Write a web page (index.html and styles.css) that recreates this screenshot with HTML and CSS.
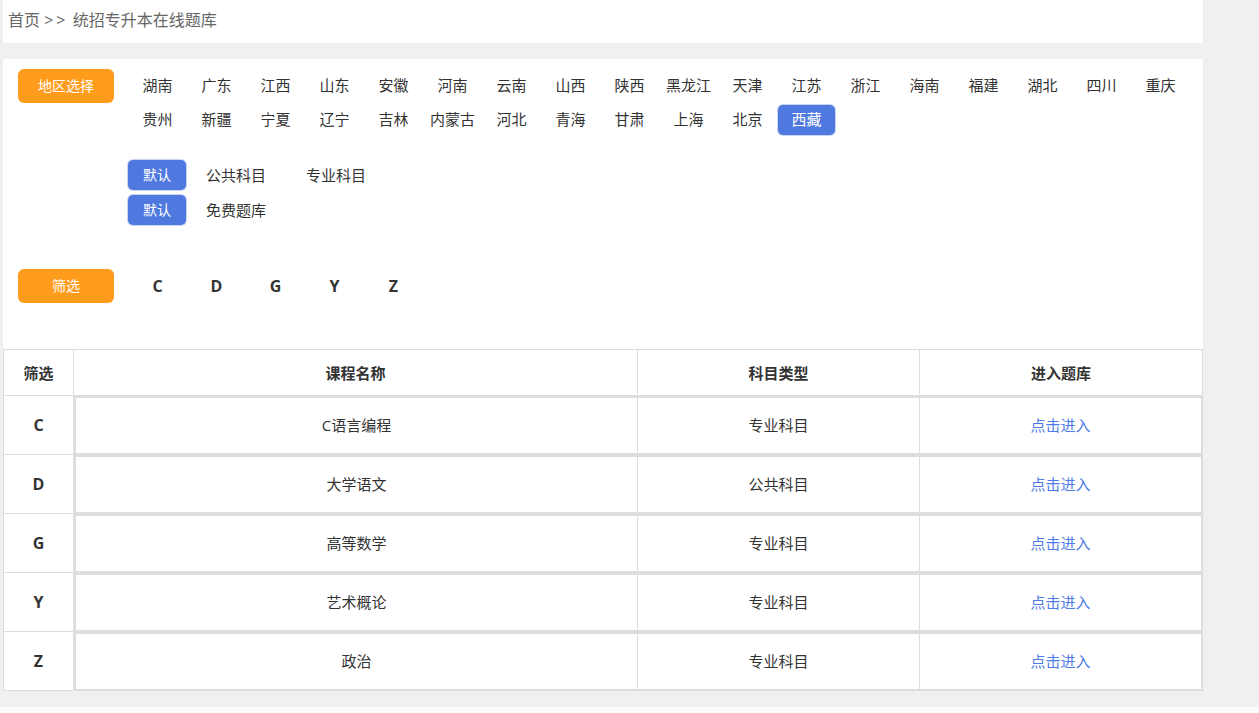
FILE: index.html
```html
<!DOCTYPE html>
<html lang="zh-CN">
<head>
<meta charset="utf-8">
<title>统招专升本在线题库</title>
<link rel="stylesheet" href="styles.css">
</head>
<body>
<div class="wrap">
  <div class="crumb">首页 <span class="sep">&gt;&gt;</span> 统招专升本在线题库</div>
  <div class="panel">
    <div class="region">
      <div class="label-btn">地区选择</div>
      <div class="prov-list">
        <span class="prov">湖南</span><span class="prov">广东</span><span class="prov">江西</span><span class="prov">山东</span><span class="prov">安徽</span><span class="prov">河南</span><span class="prov">云南</span><span class="prov">山西</span><span class="prov">陕西</span><span class="prov">黑龙江</span><span class="prov">天津</span><span class="prov">江苏</span><span class="prov">浙江</span><span class="prov">海南</span><span class="prov">福建</span><span class="prov">湖北</span><span class="prov">四川</span><span class="prov">重庆</span>
        <span class="prov">贵州</span><span class="prov">新疆</span><span class="prov">宁夏</span><span class="prov">辽宁</span><span class="prov">吉林</span><span class="prov">内蒙古</span><span class="prov">河北</span><span class="prov">青海</span><span class="prov">甘肃</span><span class="prov">上海</span><span class="prov">北京</span><span class="prov active">西藏</span>
      </div>
    </div>
    <div class="tabs">
      <div class="tab-row">
        <span class="tab active">默认</span><span class="tab">公共科目</span><span class="tab">专业科目</span>
      </div>
      <div class="tab-row">
        <span class="tab active">默认</span><span class="tab">免费题库</span>
      </div>
    </div>
    <div class="filter">
      <div class="label-btn">筛选</div>
      <span class="letter">C</span><span class="letter">D</span><span class="letter">G</span><span class="letter">Y</span><span class="letter">Z</span>
    </div>
    <div class="table">
      <div class="thead">
        <div class="th c1">筛选</div>
        <div class="th c2">课程名称</div>
        <div class="th c3">科目类型</div>
        <div class="th c4">进入题库</div>
      </div>
      <div class="tr">
        <div class="td-letter">C</div>
        <div class="box"><div class="td n">C语言编程</div><div class="td t">专业科目</div><div class="td l"><a class="enter">点击进入</a></div></div>
      </div>
      <div class="tr">
        <div class="td-letter">D</div>
        <div class="box"><div class="td n">大学语文</div><div class="td t">公共科目</div><div class="td l"><a class="enter">点击进入</a></div></div>
      </div>
      <div class="tr">
        <div class="td-letter">G</div>
        <div class="box"><div class="td n">高等数学</div><div class="td t">专业科目</div><div class="td l"><a class="enter">点击进入</a></div></div>
      </div>
      <div class="tr">
        <div class="td-letter">Y</div>
        <div class="box"><div class="td n">艺术概论</div><div class="td t">专业科目</div><div class="td l"><a class="enter">点击进入</a></div></div>
      </div>
      <div class="tr">
        <div class="td-letter">Z</div>
        <div class="box"><div class="td n">政治</div><div class="td t">专业科目</div><div class="td l"><a class="enter">点击进入</a></div></div>
      </div>
    </div>
  </div>
</div>
<div class="footer"></div>
</body>
</html>
```
FILE: styles.css
```css
* { box-sizing: border-box; }
html, body { margin: 0; padding: 0; }
body {
  background: #f0f0f0;
  font-family: "Open Sans", "Noto Sans CJK SC", sans-serif;
  color: #333;
  font-size: 15px;
}
.wrap { width: 1200px; margin-left: 3px; }
.crumb {
  height: 43px;
  background: #fff;
  padding-left: 5px;
  line-height: 40px;
  font-size: 16px;
  color: #666;
}
.sep { letter-spacing: 3px; }
.panel {
  margin-top: 16px;
  background: #fff;
  padding-top: 10px;
}
.region { display: flex; align-items: flex-start; padding-left: 15px; }
.label-btn {
  width: 96px;
  height: 34px;
  line-height: 34px;
  flex: none;
  background: #ff9c1c;
  color: #fff;
  border-radius: 6px;
  text-align: center;
  font-size: 14px;
  margin-right: 14px;
}
.prov-list { display: flex; flex-wrap: wrap; flex: 1; }
.prov {
  width: 57px;
  height: 30px;
  line-height: 29px;
  margin: 2px 1px;
  text-align: center;
  white-space: nowrap;
}
.prov.active, .tab.active {
  background: #5079e0;
  color: #fff;
  border-radius: 5px;
  box-shadow: 0 0 0 1px #c9d4f3;
}
.tabs { margin: 23px 0 0 125px; display: flex; flex-direction: column; gap: 5px; }
.tab-row { display: flex; height: 30px; }
.tab { padding: 0 20px; line-height: 30px; white-space: nowrap; }
.tab.active { width: 58px; padding: 0; text-align: center; font-size: 14px; }
.filter { display: flex; align-items: center; padding-left: 15px; margin-top: 44px; }
.letter { width: 59px; text-align: center; font-weight: bold; font-size: 16px; line-height: 34px; }
.table { margin-top: 46px; }
.thead { display: flex; height: 47px; border-top: 1px solid #ddd; border-bottom: 1px solid #ddd; }
.th {
  display: flex; align-items: center; justify-content: center;
  font-weight: bold; border-right: 1px solid #ddd;
}
.th.c1 { width: 71px; border-left: 1px solid #ddd; }
.th.c2 { width: 564px; }
.th.c3 { width: 282px; }
.th.c4 { width: 283px; }
.tr { display: flex; height: 59px; }
.td-letter {
  width: 71px; flex: none;
  border-left: 1px solid #ddd; border-right: 1px solid #ddd; border-bottom: 1px solid #ddd;
  display: flex; align-items: center; justify-content: center;
  font-weight: bold; font-size: 16px;
}
.box {
  width: 1129px;
  display: flex;
  border: 2px solid #ddd;
}
.td { display: flex; align-items: center; justify-content: center; padding-bottom: 2px; }
.td.n { width: 562px; border-right: 1px solid #ddd; }
.td.t { width: 282px; border-right: 1px solid #ddd; }
.td.l { flex: 1; }
.enter { color: #4e7be6; text-decoration: none; cursor: pointer; }
.footer { margin-top: 16px; height: 60px; background: #fafafa; }
```
